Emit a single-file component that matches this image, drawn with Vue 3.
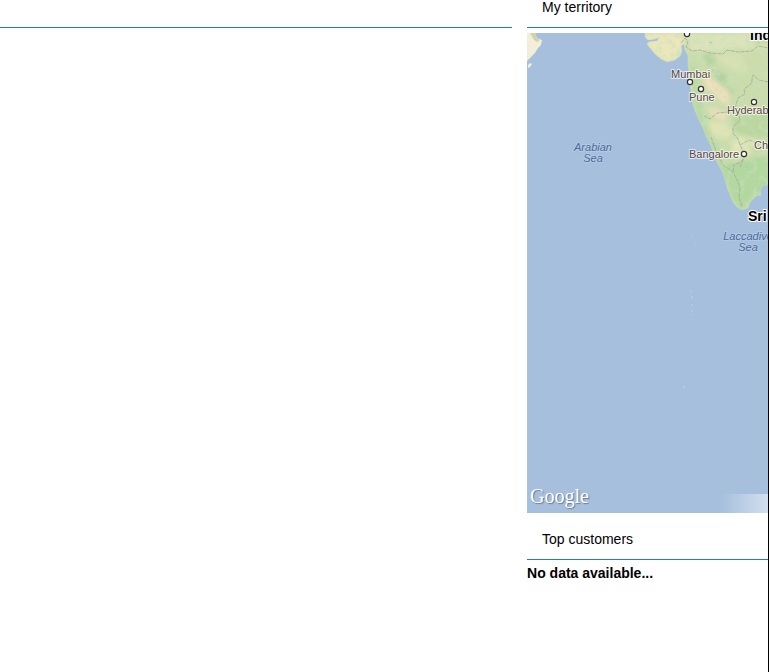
<template>
  <div class="page">
    <main class="main">
      <h2 class="title"></h2>
    </main>
    <aside class="side">
      <section class="panel">
        <h2 class="title">My territory</h2>
        <div class="map">
          <svg class="canvas" role="img" aria-label="Map">
            <defs>
              <clipPath id="land">
                <path :d="coast" />
              </clipPath>
              <filter id="soft" x="-20%" y="-20%" width="140%" height="140%">
                <feGaussianBlur stdDeviation="2" />
              </filter>
              <filter id="relief" x="0" y="0" width="100%" height="100%">
                <feTurbulence type="fractalNoise" baseFrequency="0.16" numOctaves="4" seed="6" />
                <feColorMatrix values="0 0 0 0 0.56  0 0 0 0 0.76  0 0 0 0 0.5  3 0 0 0 -1.4" />
              </filter>
            </defs>
            <path class="shelf" :d="coast" />
            <path class="ground" :d="coast" />
            <g clip-path="url(#land)">
              <g filter="url(#soft)">
                <path v-for="(area, i) in terrain" :key="i" :d="area.d" :fill="area.fill" />
              </g>
              <rect class="texture" x="110" y="0" width="300" height="190" filter="url(#relief)" />
              <path v-for="d in borders" :key="d" class="border" :d="d" />
              <path class="lakes" d="M182 9l3 1M189 43l2 1M224 47l2 2M185 38l2-1M231 9l1 2M204 73l2 0M219 133l1 2" />
            </g>
            <path class="desert" d="M0 0H8L10 5L15 7L14 12L11 15L8 20L4 24L0 28Z" />
            <path class="hills" d="M3 0H8L10 5L13 7L10 9L7 7Z" />
            <path class="desert" d="M3 30L5 31L3 34L1 35V32Z" />
            <path class="atolls" d="M164 257v2M165 263v3M165 271v2M165 277v2M166 281v1M156 353l2 2M165 202v1M168 210v1" />
            <g v-for="city in cities" :key="city.name">
              <circle class="dot" :cx="city.cx" :cy="city.cy" r="2.6" />
              <text class="city" :x="city.x" :y="city.y">{{ city.name }}</text>
            </g>
            <text v-for="country in countries" :key="country.name" class="country" :x="country.x" :y="country.y">
              {{ country.name }}
            </text>
            <text v-for="sea in seas" :key="sea.name" class="sea">
              <tspan :x="sea.x" :y="sea.y">{{ sea.name }}</tspan>
              <tspan :x="sea.x" dy="11">Sea</tspan>
            </text>
          </svg>
          <span class="logo">Google</span>
          <span class="fade"></span>
        </div>
      </section>
      <section class="panel">
        <h2 class="title">Top customers</h2>
        <p class="empty">No data available...</p>
      </section>
    </aside>
  </div>
</template>

<script setup>
const coast =
  'M118 0L118 4L121 7L128 6L133 4L130 8L122 9L120 11L128 21L134 26L140 29L148 27L153 23L155 18L154 13L157 11L158 17L161 23L161 32L162 42L163 52L165 62L166 72L171 85L176 95L180 105L183 111L187 120L190 129L196 140L199 150L201 157L206 169L210 174L215 177L221 175L223 169L229 163L234 162L233 157L237 152L244 152L243 137L250 120L262 106L290 84L330 60L360 30L370 0Z'

const terrain = [
  { d: 'M118 0H158L155 24L140 30L118 14Z', fill: '#ebe6bb' },
  { d: 'M160 0H241V16L205 16L186 19L164 18Z', fill: '#dbe3b9' },
  { d: 'M185 21L205 20L224 22L232 32L215 40L200 34Z', fill: '#d8e1b3' },
  { d: 'M163 28L170 32L173 60L180 90L192 115L203 150L196 148L180 110L168 84Z', fill: '#bcd8a5' },
  { d: 'M176 20L187 21L188 32L180 33Z', fill: '#b3d39e' },
  { d: 'M188 37L200 42L198 52L208 58L204 61L190 47Z', fill: '#b0d19c' },
  { d: 'M174 41L186 47L201 57L203 70L196 71L188 61L180 57Z', fill: '#f1dfbb' },
  { d: 'M180 74L190 76L200 80L199 88L186 84Z', fill: '#eedfba' },
  { d: 'M180 88L200 90L206 99L198 107L186 104Z', fill: '#e1e4b5' },
  { d: 'M222 2L241 0V12L228 13Z', fill: '#c9dba9' },
  { d: 'M214 20L241 20V52L226 48Z', fill: '#ccdcab' },
  { d: 'M206 83L244 78V103L226 105L208 99Z', fill: '#bbd69f' },
  { d: 'M204 107L215 102L224 118L217 126L206 122Z', fill: '#e2e6b8' },
  { d: 'M194 132L222 126L244 122V153L224 165L215 178L206 168Z', fill: '#b2d79f' },
  { d: 'M221 104L228 106L230 114L222 112Z', fill: '#e6e6ba' },
]

const borders = [
  'M154 10L158 5L161 9L159 14L165 18L173 17L183 20L196 21L200 17L211 19L225 18L231 13L241 15',
  'M241 49L232 47L226 42L224 51L217 56L218 61L211 65L208 75L201 79L190 80L183 86L177 83',
  'M211 78L213 87L206 94L206 100L211 106L213 112L218 123L213 134',
  'M213 112L222 107L230 110',
  'M184 104L189 118L196 132L206 139L210 147L213 154L212 164L215 174',
  'M206 139L207 131L213 130L218 123',
]

const cities = [
  { name: 'Mumbai', x: 144, y: 45, cx: 163, cy: 49 },
  { name: 'Pune', x: 162, y: 68, cx: 174, cy: 56 },
  { name: 'Hyderabad', x: 200, y: 81, cx: 227, cy: 69 },
  { name: 'Bangalore', x: 162, y: 125, cx: 217, cy: 121 },
  { name: 'Chennai', x: 227, y: 116, cx: 254, cy: 121 },
  { name: '', x: 160, y: 0, cx: 160, cy: 1 },
]

const countries = [
  { name: 'India', x: 223, y: 7 },
  { name: 'Sri Lanka', x: 221, y: 188 },
]

const seas = [
  { name: 'Arabian', x: 66, y: 118 },
  { name: 'Laccadive', x: 221, y: 207 },
]
</script>

<style>
body {
  margin: 0;
}
</style>

<style scoped>
.page {
  display: grid;
  grid-template-columns: minmax(0, 17fr) minmax(0, 8fr);
  column-gap: 15px;
  box-sizing: border-box;
  min-height: 100vh;
  border-right: 1px solid #000;
  background: #fff;
  color: #000;
  font-family: 'Liberation Sans', Arial, sans-serif;
  font-size: 14px;
}
.title {
  min-height: 14px;
  margin: 0 0 5px;
  padding: 0 15px 13px;
  border-bottom: 1px solid #1a7ae6;
  font-size: 14px;
  font-weight: normal;
  line-height: 14px;
}
.panel + .panel {
  margin-top: 19px;
}
.map {
  position: relative;
  height: 480px;
  overflow: hidden;
  background: #a5bfdd;
}
.canvas {
  display: block;
  width: 100%;
  height: 100%;
}
.shelf {
  fill: none;
  stroke: #b4cde3;
  stroke-width: 1;
}
.ground {
  fill: #cbdcab;
}
.texture {
  opacity: 0.6;
}
.border {
  fill: none;
  stroke: #a3ad98;
  stroke-width: 1;
  stroke-dasharray: 4 1;
  opacity: 0.8;
}
.lakes {
  fill: none;
  stroke: #a5c3d5;
}
.desert {
  fill: #f3eed7;
}
.hills {
  fill: #d6cfb1;
}
.atolls {
  fill: none;
  stroke: #b9d2e6;
}
.dot {
  fill: #fff;
  stroke: #333;
  stroke-width: 1.2;
}
.city,
.sea,
.country {
  paint-order: stroke;
  stroke-linejoin: round;
  stroke-width: 2px;
}
.city {
  fill: #5a4540;
  stroke: rgba(255, 255, 255, 0.7);
  font-size: 11px;
}
.country {
  fill: #000;
  stroke: #fff;
  font-size: 14px;
  font-weight: bold;
}
.sea {
  fill: #4b6c9c;
  stroke: #b4cae3;
  font-size: 11px;
  font-style: italic;
  text-anchor: middle;
}
.logo {
  position: absolute;
  left: 3px;
  bottom: 5px;
  color: #fff;
  font-family: 'Liberation Serif', 'Times New Roman', serif;
  font-size: 20px;
  line-height: 24px;
  text-shadow: 1px 1px 1px #667a92;
}
.fade {
  position: absolute;
  right: 0;
  bottom: 0;
  width: 48px;
  height: 19px;
  background: linear-gradient(to right, rgba(255, 255, 255, 0), rgba(255, 255, 255, 0.5));
}
.empty {
  margin: 0;
  font-weight: bold;
  line-height: 16px;
}
</style>
